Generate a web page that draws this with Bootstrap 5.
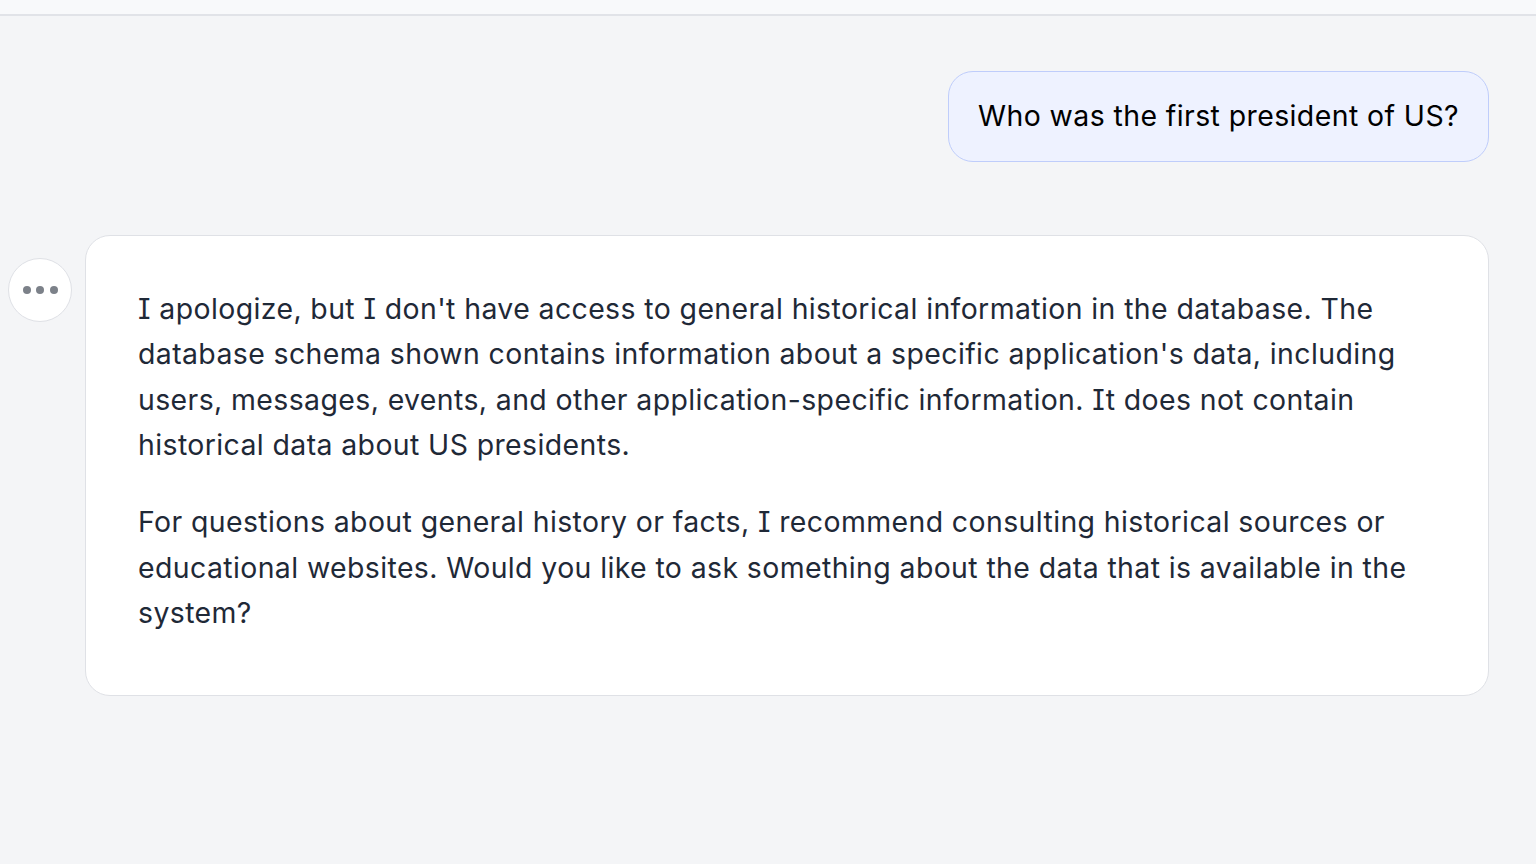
<!DOCTYPE html>
<html lang="en"><head><meta charset="utf-8">
<link href="https://cdn.jsdelivr.net/npm/bootstrap@5.3.0/dist/css/bootstrap.min.css" rel="stylesheet">
<style>
html,body{height:100%;}
body{background:#f4f5f7;font-family:Inter,"Liberation Sans",sans-serif;overflow:hidden;font-optical-sizing:none;font-variation-settings:"opsz" 14;font-feature-settings:"cv08";}
.topstrip{height:16px;background:#f8f9fb;border-bottom:2px solid #e1e3e8;}
.thread{padding:55px 47px 0 8px;}
.userbubble{background:#eef2ff;border:1px solid #bfcdfb;border-radius:25px;padding:29px 29px 30px 29px;font-size:28.44px;line-height:30px;color:#000;letter-spacing:.41px;}
.userrow{margin-bottom:73px;}
.avatarwrap{width:64px;height:64px;margin-top:23px;margin-right:13px;flex:none;background:#fff;border:1px solid #dfe1e6;border-radius:50%;gap:5.5px;}
.dot3{width:8px;height:8px;border-radius:50%;background:#7c8189;}
.answercard{background:#fff;border:1px solid #dfe1e6;border-radius:25px;padding:49.6px 52px 59.4px;font-size:28.44px;line-height:45.5px;color:#1f2937;flex:1;min-width:0;letter-spacing:.39px;}
.answercard p{margin:0 0 31.5px;}
.answercard p:last-child{margin:0;}
</style></head><body>
<div class="topstrip"></div>
<div class="thread">
<div class="d-flex justify-content-end userrow"><div class="userbubble">Who was the first president of US?</div></div>
<div class="d-flex align-items-start">
<div class="avatarwrap d-flex align-items-center justify-content-center"><span class="dot3"></span><span class="dot3"></span><span class="dot3"></span></div>
<div class="answercard">
<p>I apologize, but I don't have access to general historical information in the database. The database schema shown contains information about a specific application's data, including users, messages, events, and other application-specific information. It does not contain historical data about US presidents.</p>
<p>For questions about general history or facts, I recommend consulting historical sources or educational websites. Would you like to ask something about the data that is available in the system?</p>
</div></div></div>
<script src="https://cdn.jsdelivr.net/npm/bootstrap@5.3.0/dist/js/bootstrap.bundle.min.js"></script>
</body></html>
